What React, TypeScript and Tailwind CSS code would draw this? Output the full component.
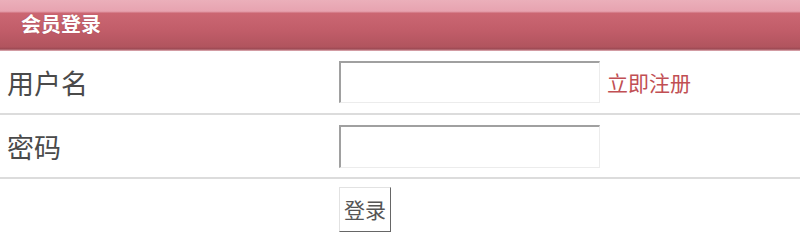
import React from 'react';

const cjk = "font-['Microsoft_YaHei','Noto_Sans_CJK_SC',sans-serif]";

export default function App() {
  return (
    <div className={`w-[800px] h-[237px] bg-white overflow-hidden ${cjk}`}>
      {/* Header bar */}
      <div className="h-[51px] bg-[linear-gradient(to_bottom,#ebafba_0%,#e7a3b0_22%,#cb6672_26%,#c15d69_60%,#b1545e_92%,#9c4953_96%,#e4b6bd_100%)] flex items-center pl-[21px] pb-[3px]">
        <span className="text-white text-[20px] font-bold leading-none [text-shadow:0_0_1px_rgba(120,30,40,0.5)]">会员登录</span>
      </div>

      {/* Username row */}
      <div className="h-[64px] flex items-center border-b-2 border-[#dcdcdc]">
        <div className="w-[339px] pl-[7px] text-[27px] text-[#4a4a4a] leading-none">用户名</div>
        <input
          type="text"
          className="w-[261px] h-[42px] bg-white border-t-2 border-l-2 border-r border-b border-t-[#a0a0a0] border-l-[#a0a0a0] border-r-[#ececec] border-b-[#ececec] outline-none"
        />
        <a className="ml-[7px] text-[21px] text-[#c14f54] leading-none">立即注册</a>
      </div>

      {/* Password row */}
      <div className="h-[64px] flex items-center border-b-2 border-[#dcdcdc]">
        <div className="w-[339px] pl-[7px] text-[27px] text-[#4a4a4a] leading-none">密码</div>
        <input
          type="password"
          className="w-[261px] h-[43px] bg-white border-t-2 border-l-2 border-r border-b border-t-[#a0a0a0] border-l-[#a0a0a0] border-r-[#ececec] border-b-[#ececec] outline-none"
        />
      </div>

      {/* Submit row */}
      <div className="flex pt-[8px]">
        <div className="w-[339px]" />
        <button className="w-[52px] h-[45px] bg-white border border-t-[#e2e2e2] border-l-[#e2e2e2] border-r-[#666] border-b-[#666] text-[21px] text-[#555] leading-none">
          登录
        </button>
      </div>
    </div>
  );
}
